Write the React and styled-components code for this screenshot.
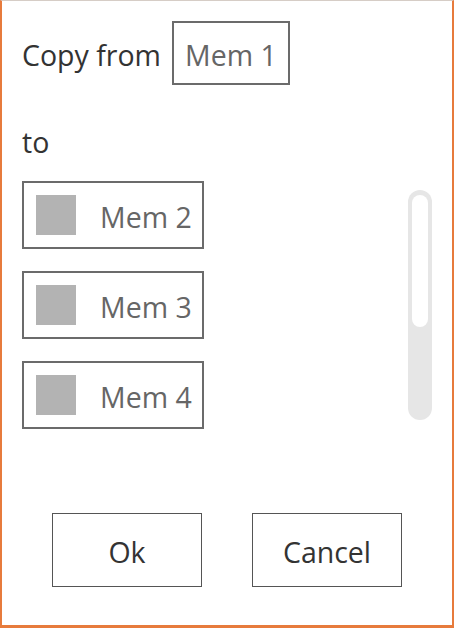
import React from "react";
import styled, { createGlobalStyle } from "styled-components";

const Global = createGlobalStyle`
  html, body { margin: 0; padding: 0; background: #fff; }
  body { font-family: "Open Sans", "Noto Sans", sans-serif; }
  * { box-sizing: border-box; }
`;

const Frame = styled.div`
  width: 454px;
  height: 628px;
  border-top: 1px solid #d6cdc6;
  border-left: 2px solid #e77b3c;
  border-right: 2px solid #e77b3c;
  border-bottom: 3px solid #e77b3c;
  display: flex;
  flex-direction: column;
  padding: 20px 20px 0 20px;
  color: #333;
`;

const FromRow = styled.div`
  display: flex;
  align-items: center;
  gap: 11px;
  font-size: 28.5px;
`;

const Label = styled.span`
  color: #333;
  padding-top: 3px;
`;

const FromBox = styled.div`
  width: 118px;
  height: 64px;
  border: 2px solid #6b6b6b;
  display: flex;
  align-items: center;
  justify-content: center;
  color: #666;
  font-size: 28.5px;
  padding-top: 3px;
`;

const ToLabel = styled.div`
  margin-top: 40px;
  font-size: 28.5px;
  color: #333;
  line-height: 34px;
`;

const ListArea = styled.div`
  margin-top: 22px;
  display: flex;
  justify-content: space-between;
`;

const List = styled.div`
  display: flex;
  flex-direction: column;
  gap: 22px;
`;

const Item = styled.div`
  width: 182px;
  height: 68px;
  border: 2px solid #6b6b6b;
  display: flex;
  align-items: center;
  padding-left: 12px;
  gap: 24px;
`;

const Swatch = styled.div`
  width: 40px;
  height: 40px;
  background: #b3b3b3;
`;

const ItemText = styled.span`
  color: #666;
  font-size: 28.5px;
  white-space: nowrap;
  padding-top: 3px;
`;

const Track = styled.div`
  margin-top: 9px;
  width: 24px;
  height: 230px;
  border-radius: 12px;
  background: #e6e6e6;
  padding: 5px 4px;
`;

const Thumb = styled.div`
  width: 16px;
  height: 132px;
  border-radius: 8px;
  background: #fff;
`;

const Buttons = styled.div`
  margin-top: 84px;
  display: flex;
  justify-content: center;
  gap: 50px;
`;

const Button = styled.button`
  width: 150px;
  height: 74px;
  border: 1.5px solid #555;
  background: #fff;
  font-family: inherit;
  font-size: 28.5px;
  color: #333;
  padding: 3px 0 0 0;
  cursor: pointer;
`;

export default function App() {
  return (
    <>
      <Global />
      <Frame>
        <FromRow>
          <Label>Copy from</Label>
          <FromBox>Mem 1</FromBox>
        </FromRow>
        <ToLabel>to</ToLabel>
        <ListArea>
          <List>
            {["Mem 2", "Mem 3", "Mem 4"].map((m) => (
              <Item key={m}>
                <Swatch />
                <ItemText>{m}</ItemText>
              </Item>
            ))}
          </List>
          <Track>
            <Thumb />
          </Track>
        </ListArea>
        <Buttons>
          <Button>Ok</Button>
          <Button>Cancel</Button>
        </Buttons>
      </Frame>
    </>
  );
}
